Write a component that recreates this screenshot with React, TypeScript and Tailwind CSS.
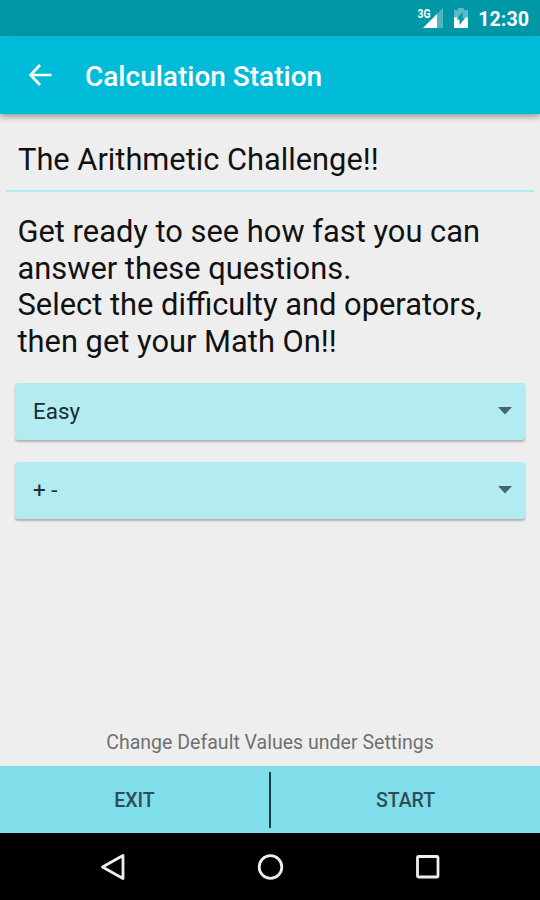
import { useState } from "react";

const introLines = [
  "Get ready to see how fast you can",
  "answer these questions.",
  "Select the difficulty and operators,",
  "then get your Math On!!",
];

function StatusBar() {
  return (
    <div className="flex h-9 shrink-0 items-center justify-end bg-[#0097a7] pr-[11px] text-white">
      <svg width="26" height="24" viewBox="0 0 26 24" className="mr-[11px]">
        <path d="M26 2v20H6z" fill="#fff" fillOpacity="0.3" />
        <path d="M20 8v14H6z" fill="#fff" />
        <text
          x="0.500"
          y="11.500"
          fill="#fff"
          className="font-['Roboto',sans-serif] text-[12.500px] font-bold"
          textLength="13"
          lengthAdjust="spacingAndGlyphs"
        >
          3G
        </text>
      </svg>
      <svg width="14" height="20" viewBox="0 0 14 20" className="mr-[10px]">
        <path d="M4 0h6v2h4v8H0V2h4z" fill="#fff" fillOpacity="0.35" />
        <path d="M0 9.500h14V20H0z" fill="#fff" />
        <path d="M8.500 4v5.500h3L5.500 17v-5.500H2.500z" fill="#0097a7" />
      </svg>
      <span className="mt-[3px] text-[19.700px] leading-6 font-bold">12:30</span>
    </div>
  );
}

function AppBar() {
  return (
    <header className="relative flex h-[78px] shrink-0 items-center bg-[#00bcd9] pl-[28px] text-white shadow-[0_3px_6px_rgba(0,0,0,0.35)]">
      <button aria-label="Back">
        <svg width="24" height="24" viewBox="0 0 24 24" fill="none" stroke="#fff" strokeWidth="2.700">
          <path d="M12 2 2.500 12 12 22M2.500 12H23.500" />
        </svg>
      </button>
      <h1 className="mt-[3px] ml-[33px] text-[28px] leading-8 font-medium">Calculation Station</h1>
    </header>
  );
}

function Spinner({ value }: { value: string }) {
  return (
    <button className="flex h-[57px] w-full items-center justify-between rounded-[3px] bg-[#b2ebf0] pr-[13px] pl-[18px] text-[22.400px] text-[#1a2d31] shadow-[0_2px_2px_rgba(0,0,0,0.25)]">
      <span>{value}</span>
      <svg width="14" height="8" viewBox="0 0 14 8">
        <path d="M0 0h14L7 7.500z" fill="#47656b" />
      </svg>
    </button>
  );
}

function NavBar() {
  return (
    <nav className="flex h-[67px] shrink-0 items-center bg-black pl-[99px]">
      <svg width="342" height="28" viewBox="0 0 342 28" fill="none" stroke="#eee" strokeWidth="2.800">
        <path d="M24 2.500v23L3.500 14z" strokeLinejoin="round" />
        <circle cx="171.500" cy="14" r="11.300" />
        <rect x="318.500" y="3.500" width="20.500" height="20.500" rx="1" />
      </svg>
    </nav>
  );
}

export default function App() {
  const [difficulty] = useState("Easy");
  const [operators] = useState("+ -");

  return (
    <div className="flex h-[900px] w-[540px] flex-col overflow-hidden bg-[#eeeeee] font-['Roboto',sans-serif]">
      <StatusBar />
      <AppBar />

      <main className="flex flex-1 flex-col">
        <div className="mx-[6px] h-[78px] border-b-2 border-[#b2ebf2] pt-[28px] pl-3">
          <h2 className="text-[30.800px] leading-9 text-[#111]">The Arithmetic Challenge!!</h2>
        </div>

        <div className="mt-[22px] pl-[17.500px] text-[30.850px] leading-[36.600px] whitespace-nowrap text-[#111]">
          {introLines.map((line) => (
            <p key={line}>{line}</p>
          ))}
        </div>

        <div className="mt-[22.600px] flex flex-col gap-[22px] px-[15px]">
          <Spinner value={difficulty} />
          <Spinner value={operators} />
        </div>

        <p className="mt-auto mb-[11px] text-center text-[19.550px] leading-6 text-[#707070]">
          Change Default Values under Settings
        </p>
      </main>

      <footer className="flex h-[67px] shrink-0 items-center bg-[#80deea] text-[19.500px] font-medium text-[#2c4e54]">
        <button className="flex-1 pt-[2px]">EXIT</button>
        <div className="h-14 w-[2px] bg-[#173a40]" />
        <button className="flex-1 pt-[2px]">START</button>
      </footer>
      <NavBar />
    </div>
  );
}
